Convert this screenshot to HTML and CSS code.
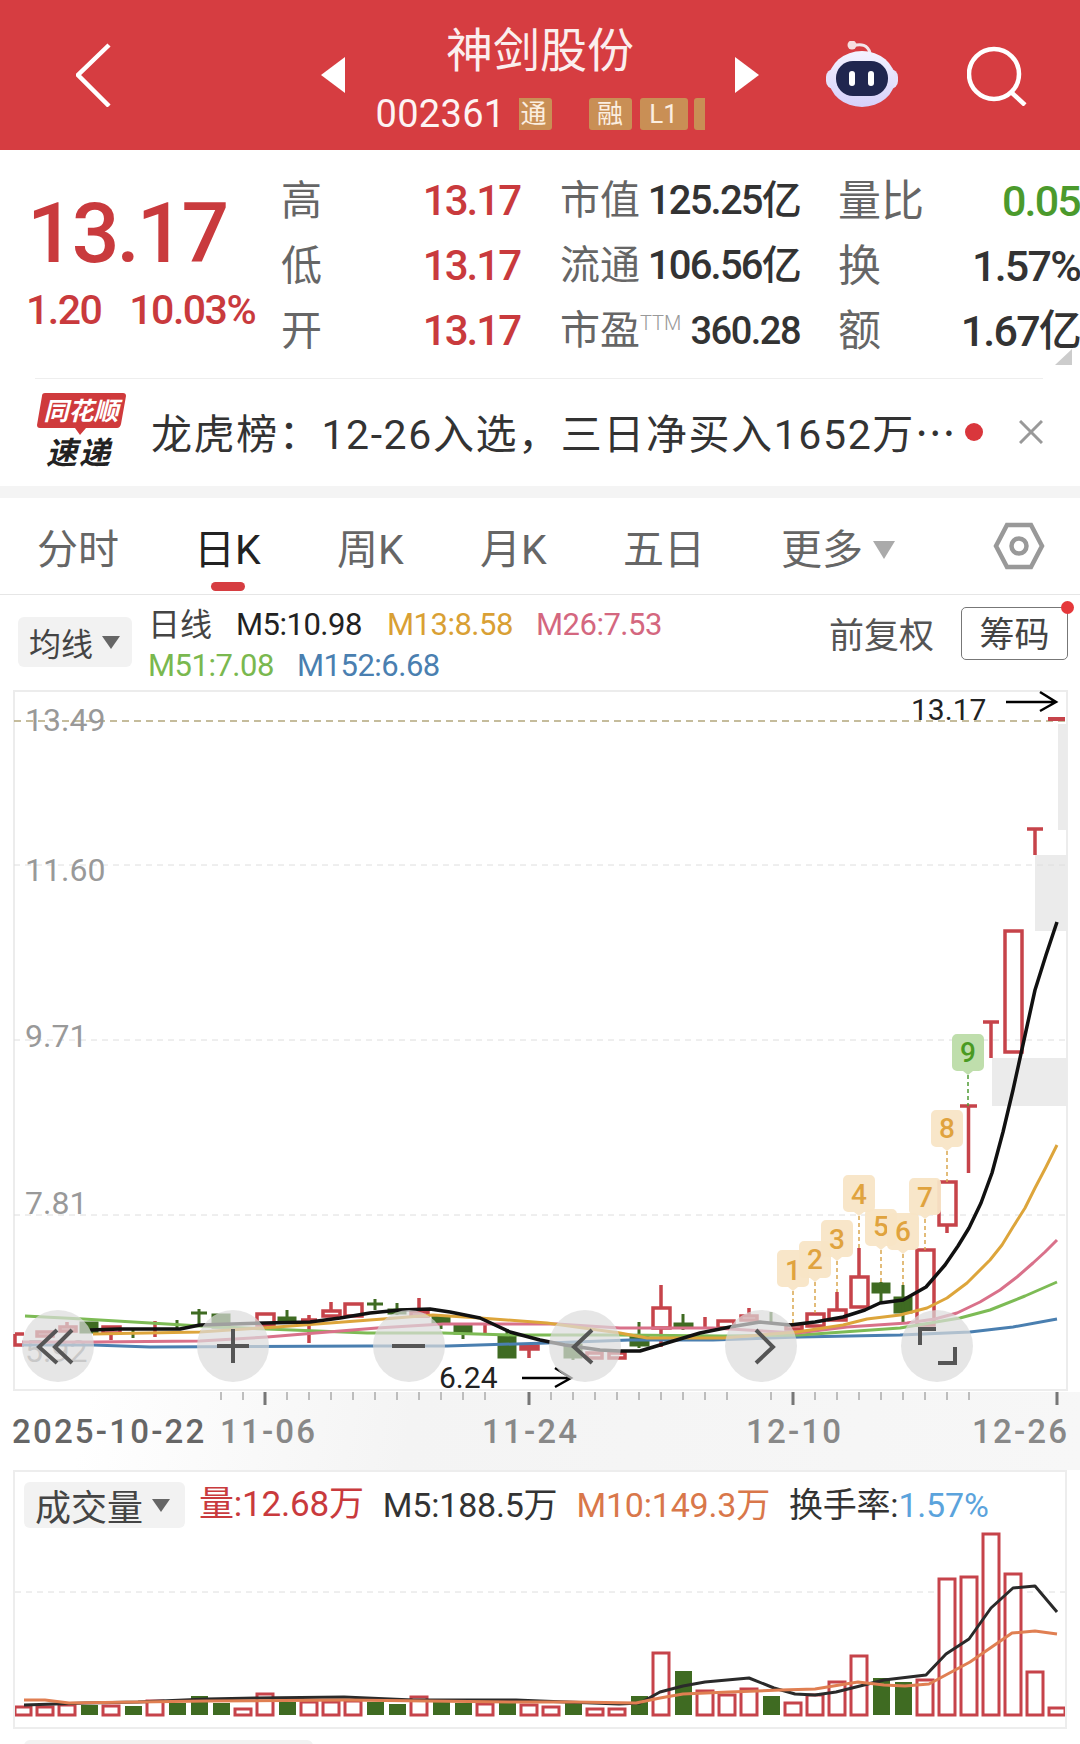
FILE: index.html
```html
<!DOCTYPE html>
<html lang="zh-CN">
<head>
  <meta charset="UTF-8">
  <title>神剑股份</title>
  <link rel="stylesheet" href="styles.css">
</head>
<body>
  <header class="topbar">
    <svg class="back" width="36" height="64" viewBox="0 0 36 64"><path d="M33 2 2 32l31 31"/></svg>
    <svg class="tri" width="24" height="36" viewBox="0 0 24 36"><path d="M24 0v36L0 18z"/></svg>
    <div class="title-block">
      <div class="title">神剑股份</div>
      <div class="code-row">
        <span class="code">002361</span>
        <div class="tags">
          <span class="tag tag-cut">通</span>
          <span class="tag tag-rong">融</span>
          <span class="tag tag-l1">L1</span>
          <span class="tag tag-end"></span>
        </div>
      </div>
    </div>
    <svg class="tri" width="24" height="36" viewBox="0 0 24 36"><path d="M0 0v36l24-18z"/></svg>
    <svg class="robot" width="72" height="68" viewBox="825 42 72 68">
      <defs>
        <linearGradient id="shell" x1="0" y1="0" x2="0" y2="1">
          <stop offset="0" stop-color="#f4f3ff"/>
          <stop offset="1" stop-color="#d6d0fa"/>
        </linearGradient>
      </defs>
      <path d="M852 47c8-3 15-1 17 7" fill="none" stroke="#f2e6ea" stroke-width="3"/>
      <circle cx="851" cy="46" r="4.5" fill="#f6dfe0"/>
      <rect x="825" y="70" width="72" height="20" rx="8" fill="#e6e2fb"/>
      <ellipse cx="861" cy="80" rx="33" ry="28" fill="url(#shell)"/>
      <rect x="835" y="62" width="52" height="35" rx="17" fill="#20264f"/>
      <rect x="848" y="72" width="6" height="15" rx="3" fill="#fff"/>
      <rect x="867" y="72" width="6" height="15" rx="3" fill="#fff"/>
    </svg>
    <svg class="search" width="60" height="62" viewBox="966 46 60 62"><circle cx="993" cy="76" r="25"/><path d="m1010 94 14 13"/></svg>
  </header>

  <section class="quote">
    <div class="price-box">
      <div class="price">13.17</div>
      <div class="change"><span>1.20</span><span>10.03%</span></div>
    </div>
    <div class="stats">
      <span class="lab big-lab">高</span><span class="val red">13.17</span>
      <span class="lab pad">市值</span><span class="val">125.25亿</span>
      <span class="lab pad2">量比</span><span class="val wide green">0.05</span>
      <span class="lab big-lab">低</span><span class="val red">13.17</span>
      <span class="lab pad">流通</span><span class="val">106.56亿</span>
      <span class="lab pad2">换</span><span class="val wide">1.57%</span>
      <span class="lab big-lab">开</span><span class="val red">13.17</span>
      <span class="lab pad">市盈<sup class="ttm">TTM</sup></span><span class="val tight">360.28</span>
      <span class="lab pad2">额</span><span class="val wide">1.67亿</span>
    </div>
    <span class="corner"></span>
  </section>

  <section class="news">
    <svg class="logo" width="90" height="80" viewBox="37 395 90 80">
      <path d="M45 396h78q3 0 3 3l-5 28q-1 4-4 4H86l-6 7-5-7H40q-3 0-3-3l5-29q0-3 3-3z" fill="#cf3a3c"/>
      <text x="81" y="423" class="logo-top">同花顺</text>
      <text x="79" y="467" class="logo-bot">速递</text>
    </svg>
    <div class="news-text">龙虎榜：12-26入选，三日净买入1652万⋯</div>
    <span class="news-dot"></span>
    <svg class="news-x" width="24" height="24" viewBox="0 0 24 24"><path d="M1 1l22 22M23 1 1 23"/></svg>
  </section>

  <nav class="tabs">
    <span class="tab">分时</span>
    <span class="tab active">日K</span>
    <span class="tab">周K</span>
    <span class="tab">月K</span>
    <span class="tab">五日</span>
    <span class="tab more">更多<i class="caret"></i></span>
    <svg class="gear" width="52" height="48" viewBox="993 522 52 48"><path d="M1007 525h24l11 21-11 21h-24l-11-21z"/><circle cx="1019" cy="546" r="7.5"/></svg>
  </nav>

  <section class="legend">
    <div class="pill">均线<i class="caret dark"></i></div>
    <div class="ma">
      <div class="ma-row">
        <span class="ma-name">日线</span>
        <span class="ma-item m5">M5:10.98</span>
        <span class="ma-item m13">M13:8.58</span>
        <span class="ma-item m26">M26:7.53</span>
      </div>
      <div class="ma-row">
        <span class="ma-item m51">M51:7.08</span>
        <span class="ma-item m152">M152:6.68</span>
      </div>
    </div>
    <div class="legend-right">
      <span class="adjust">前复权</span>
      <span class="chips">筹码<i class="chips-dot"></i></span>
    </div>
  </section>

  <svg class="kline" width="1080" height="702" viewBox="0 690 1080 702">
    <rect x="14" y="691" width="1053" height="699" fill="#fff" stroke="#ececec" stroke-width="2"/>
    <path class="band" d="M1058 724h9v106h-9zM1035 855h32v76h-32zM992 1058h75v48h-75z"/>
    <path class="grid" d="M14 865h1053M14 1040h1053M14 1215h1053"/>
    <path class="grid-top" d="M14 721h1053"/>

    <text class="axis-y" x="25" y="731">13.49</text>
    <text class="axis-y" x="25" y="881">11.60</text>
    <text class="axis-y" x="25" y="1047">9.71</text>
    <text class="axis-y" x="25" y="1214">7.81</text>
    <text class="axis-y" x="25" y="1362">5.92</text>

    <path class="up" d="M1027 829h16M1035 829v26M1005 931h17v121h-17zM983 1022h16M991 1022v36M960 1106h17M968.500 1106v67M939 1182h17v43h-17zM947 1225v8M917 1250h17v75h-17zM851 1277h17v30h-17zM859 1248v29M829 1310h17v10h-17zM837 1292v18M807 1314h17v12h-17zM786 1325h16v4h-16zM257 1314h17v11h-17zM265 1325v5M301 1320h16M309 1315v28M323 1311h17v5h-17zM331 1302v9M345 1304h17v12h-17zM103 1327h17v6h-17zM111 1333v7M15 1334h9M15 1334v11h9M37 1332h16v4h-16zM60 1327h16v4h-16zM67 1322v5M155 1321v16M411 1312h17v4h-17zM419 1298v14M485 1325v9M521 1346h17v3h-17zM529 1349v9M587 1353h15v5h-15zM609 1353h16v5h-16zM653 1308h17v20h-17zM661 1285v23M661 1328v19M705 1317v12M718 1321h16v7h-16zM741 1316h16v4h-16zM749 1308v8"/>
    <path class="up-flat" d="M1048 719h17"/>
    <path class="dn" d="M895 1298h16v14h-16zM903 1285v37M873 1284h16v8h-16zM881 1282v20M771 1312v12M675 1324h17v2h-17zM683 1314v16M631 1337h17v8h-17zM639 1322v26M565 1345h16v12h-16zM573 1357v3M499 1337h16v20h-16zM507 1329v8M455 1326h16v7h-16zM463 1333v6M433 1317h16v6h-16zM441 1323v6M389 1310h16v3h-16zM397 1303v12M367 1304h16M375 1299v11M279 1318h16v3h-16zM287 1310v13M191 1313h16M199 1309v15M213 1315h16v12h-16zM177 1320v8M133 1330v8M81 1323h16v9h-16z"/>

    <polyline class="ma-line blue" points="22,1345 93,1345 150,1347 367,1346 447,1346 547,1343 630,1340 713,1340 800,1337 900,1335 970,1332 1013,1327 1057,1319"/>
    <polyline class="ma-line lime" points="25,1316 83,1319 167,1324 200,1326 267,1329 367,1333 443,1333 513,1335 620,1335 723,1336 800,1335 900,1328 960,1318 990,1310 1025,1296 1057,1282"/>
    <polyline class="ma-line pink" points="22,1342 93,1342 200,1341 267,1337 377,1328 443,1324 557,1324 620,1328 713,1328 797,1333 847,1327 907,1323 935,1319 957,1313 980,1302 1000,1290 1017,1277 1033,1263 1045,1252 1057,1240"/>
    <polyline class="ma-line gold" points="93,1334 200,1332 277,1327 383,1319 433,1315 480,1318 547,1323 620,1333 647,1338 723,1338 797,1332 843,1325 867,1319 900,1315 927,1308 947,1298 967,1283 990,1260 1002,1245 1013,1227 1025,1208 1035,1188 1046,1167 1057,1145"/>
    <polyline class="ma-line black" points="90,1330 120,1329 180,1329 200,1325 265,1323 310,1322 340,1318 370,1313 400,1310 430,1309 450,1312 480,1318 510,1332 540,1340 565,1345 600,1350 620,1351 640,1351 660,1345 700,1333 730,1327 760,1322 790,1325 815,1322 843,1317 865,1310 880,1303 903,1300 926,1287 945,1265 958,1246 969,1228 981,1203 992,1173 1003,1132 1013,1090 1024,1040 1035,990 1046,955 1057,922"/>

    <path class="tag-line" d="M793 1291v34M815 1282v31M837 1261v31M859 1216v32M881 1250v32M903 1254v31M925 1219v31M947 1151v31"/>
    <path class="tag-line tag-line-g" d="M968 1075v31"/>

    <g transform="translate(793 1291)"><path class="note" d="M-11-41h22a5 5 0 0 1 5 5v27a5 5 0 0 1-5 5h-6l-5 4-5-4h-6a5 5 0 0 1-5-5v-27a5 5 0 0 1 5-5z"/><text class="note-num" y="-11">1</text></g>
    <g transform="translate(815 1282)"><path class="note" d="M-11-41h22a5 5 0 0 1 5 5v27a5 5 0 0 1-5 5h-6l-5 4-5-4h-6a5 5 0 0 1-5-5v-27a5 5 0 0 1 5-5z"/><text class="note-num" y="-13">2</text></g>
    <g transform="translate(837 1261)"><path class="note" d="M-11-41h22a5 5 0 0 1 5 5v27a5 5 0 0 1-5 5h-6l-5 4-5-4h-6a5 5 0 0 1-5-5v-27a5 5 0 0 1 5-5z"/><text class="note-num" y="-12">3</text></g>
    <g transform="translate(859 1216)"><path class="note" d="M-11-41h22a5 5 0 0 1 5 5v27a5 5 0 0 1-5 5h-6l-5 4-5-4h-6a5 5 0 0 1-5-5v-27a5 5 0 0 1 5-5z"/><text class="note-num" y="-12">4</text></g>
    <g transform="translate(881 1250)"><path class="note" d="M-11-41h22a5 5 0 0 1 5 5v27a5 5 0 0 1-5 5h-6l-5 4-5-4h-6a5 5 0 0 1-5-5v-27a5 5 0 0 1 5-5z"/><text class="note-num" y="-14">5</text></g>
    <g transform="translate(903 1254)"><path class="note" d="M-11-41h22a5 5 0 0 1 5 5v27a5 5 0 0 1-5 5h-6l-5 4-5-4h-6a5 5 0 0 1-5-5v-27a5 5 0 0 1 5-5z"/><text class="note-num" y="-13">6</text></g>
    <g transform="translate(925 1219)"><path class="note" d="M-11-41h22a5 5 0 0 1 5 5v27a5 5 0 0 1-5 5h-6l-5 4-5-4h-6a5 5 0 0 1-5-5v-27a5 5 0 0 1 5-5z"/><text class="note-num" y="-12">7</text></g>
    <g transform="translate(947 1151)"><path class="note" d="M-11-41h22a5 5 0 0 1 5 5v27a5 5 0 0 1-5 5h-6l-5 4-5-4h-6a5 5 0 0 1-5-5v-27a5 5 0 0 1 5-5z"/><text class="note-num" y="-13">8</text></g>
    <g transform="translate(968 1075)"><path class="note note-g" d="M-11-41h22a5 5 0 0 1 5 5v27a5 5 0 0 1-5 5h-6l-5 4-5-4h-6a5 5 0 0 1-5-5v-27a5 5 0 0 1 5-5z"/><text class="note-num note-num-g" y="-13">9</text></g>

    <text class="mark" x="911" y="720">13.17</text>
    <path class="mark-arrow" d="M1006 702h50M1040 692l16 10-16 9"/>
    <text class="mark" x="439" y="1388">6.24</text>
    <path class="mark-arrow" d="M522 1378h48M555 1368l16 10-16 9"/>

    <circle class="ctl" cx="58" cy="1346" r="36"/>
    <circle class="ctl" cx="233" cy="1346" r="36"/>
    <circle class="ctl" cx="409" cy="1346" r="36"/>
    <circle class="ctl" cx="585" cy="1346" r="36"/>
    <circle class="ctl" cx="761" cy="1346" r="36"/>
    <circle class="ctl" cx="937" cy="1346" r="36"/>
    <path class="ctl-icon" d="M57 1330l-18 17 18 16M72 1330l-17 17 17 16M217 1346h32M233 1329v34M392 1346h33M592 1330l-18 17 18 16M756 1330l17 17-17 16M920 1345v-16h16M938 1363h17v-16"/>
  </svg>

  <section class="axis">
    <svg class="ticks" width="1080" height="16" viewBox="0 1392 1080 16">
      <path class="tick" d="M221 1392v8m22-8v8m44-8v8m22-8v8m22-8v8m22-8v8m22-8v8m22-8v8m22-8v8m22-8v8m22-8v8m22-8v8m44-8v8m22-8v8m22-8v8m22-8v8m22-8v8m22-8v8m22-8v8m22-8v8m22-8v8m22-8v8m44-8v8m22-8v8m22-8v8m22-8v8m22-8v8m22-8v8m22-8v8m22-8v8m22-8v8m22-8v8"/>
      <path class="tick-major" d="M265 1392v13M529 1392v13M793 1392v13M1057 1392v13"/>
    </svg>
    <div class="dates">
      <span class="date first">2025-10-22</span>
      <span class="date d1">11-06</span>
      <span class="date d2">11-24</span>
      <span class="date d3">12-10</span>
      <span class="date d4">12-26</span>
    </div>
  </section>

  <section class="vol">
    <div class="vol-head">
      <div class="pill vol-pill">成交量<i class="caret dark"></i></div>
      <span class="vol-item red">量:12.68万</span>
      <span class="vol-item">M5:188.5万</span>
      <span class="vol-item orange">M10:149.3万</span>
      <span class="vol-item">换手率:<b class="rate">1.57%</b></span>
    </div>
    <svg class="vol-chart" width="1050" height="193" viewBox="15 1532 1050 193">
      <path class="grid" d="M15 1592h1050"/>
      <path class="vol-up" d="M15 1707h16v8h-16zM37 1707h16v8h-16zM59 1705h16v10h-16zM103 1706h16v9h-16zM147 1701h16v14h-16zM235 1709h16v6h-16zM257 1694h16v21h-16zM301 1702h16v13h-16zM323 1702h16v13h-16zM345 1701h16v14h-16zM411 1697h16v18h-16zM477 1704h16v11h-16zM521 1705h16v10h-16zM543 1707h16v8h-16zM587 1709h16v6h-16zM609 1709h16v6h-16zM653 1653h16v62h-16zM697 1691h16v24h-16zM719 1695h16v20h-16zM741 1689h16v26h-16zM785 1703h16v12h-16zM807 1695h16v20h-16zM829 1682h16v33h-16zM851 1656h16v59h-16zM917 1680h16v35h-16zM939 1579h16v136h-16zM961 1577h16v138h-16zM983 1534h16v181h-16zM1005 1574h16v141h-16zM1027 1672h16v43h-16zM1049 1708h16v7h-16z"/>
      <path class="vol-dn" d="M81 1705h17v10h-17zM125 1706h17v9h-17zM169 1703h17v12h-17zM191 1696h17v19h-17zM213 1703h17v12h-17zM279 1702h17v13h-17zM367 1702h17v13h-17zM389 1704h17v11h-17zM433 1702h17v13h-17zM455 1703h17v12h-17zM499 1702h17v13h-17zM565 1703h17v12h-17zM631 1696h17v19h-17zM675 1671h17v44h-17zM763 1696h17v19h-17zM873 1678h17v37h-17zM895 1682h17v33h-17z"/>
      <polyline class="vol-line v-black" points="24,1705 86,1703 138,1702 207,1699 258,1698 344,1697 413,1700 516,1700 540,1701 619,1704 640,1703 660,1692 683,1686 705,1682 749,1678 774,1688 795,1694 815,1695 836,1692 864,1685 884,1680 926,1675 946,1654 969,1639 991,1608 1013,1588 1035,1586 1057,1612"/>
      <polyline class="vol-line v-orange" points="24,1700 45,1700 69,1703 207,1701 344,1700 516,1702 574,1702 636,1703 660,1698 683,1694 729,1692 781,1690 815,1689 858,1682 884,1685 905,1686 929,1684 970,1662 1012,1633 1035,1631 1057,1634"/>
    </svg>
  </section>

  <div class="next-row"><span class="next-pill"></span></div>
</body>
</html>
```

FILE: styles.css
```css
* { box-sizing: border-box; }
html, body { margin: 0; padding: 0; }
body {
  width: 1080px;
  height: 1744px;
  overflow: hidden;
  background: #fff;
  color: #333;
  font-family: Roboto, "Noto Sans CJK SC", sans-serif;
}
i { font-style: normal; }

/* top bar */
.topbar {
  display: flex;
  align-items: center;
  height: 150px;
  padding-left: 76px;
  background: #d63d41;
}
.back { margin-right: 209px; }
.back path { fill: none; stroke: #fff; stroke-width: 4.500; }
.tri { fill: #fff; }
.title-block {
  display: flex;
  flex-direction: column;
  align-items: center;
  align-self: flex-start;
  width: 390px;
  padding-top: 23px;
  color: #fff;
}
.title { font-size: 47px; line-height: 56px; color: #fbeeee; }
.code-row { display: flex; align-items: center; width: 329px; margin-top: 19px; }
.code { width: 143px; font-size: 38px; line-height: 32px; letter-spacing: .3px; color: #fdf3f3; }
.tags { display: flex; width: 186px; overflow: hidden; }
.tag {
  display: block;
  height: 32px;
  background: #c98f55;
  border-radius: 3px;
  color: #fbeee0;
  font-size: 26px;
  line-height: 32px;
  text-align: center;
}
.tag-cut { width: 33px; border-radius: 0 3px 3px 0; text-indent: -3px; }
.tag-rong { width: 43px; margin-left: 37px; }
.tag-l1 { width: 48px; margin-left: 8px; }
.tag-end { width: 11px; margin-left: 6px; border-radius: 3px 0 0 3px; }
.robot { margin-left: 67px; }
.search { margin-left: 69px; fill: none; stroke: #fff; stroke-width: 4.500; }

/* quote */
.quote { position: relative; display: flex; height: 228px; padding: 18px 0 0 28px; }
.price-box { width: 253px; }
.price {
  margin: 26px 0 0 -1px;
  font-size: 84px;
  line-height: 80px;
  font-weight: 500;
  letter-spacing: -3px;
  color: #c93a3d;
}
.change {
  display: flex;
  gap: 28px;
  margin: 14px 0 0 -2px;
  font-size: 41px;
  line-height: 44px;
  font-weight: 500;
  letter-spacing: -1.500px;
  color: #c93a3d;
}
.stats {
  display: grid;
  grid-template-columns: 50px 189px 120px 160px 140px 140px;
  grid-auto-rows: 65px;
  align-items: center;
  width: 799px;
}
.lab { font-size: 40px; line-height: 50px; color: #666; white-space: nowrap; }
.big-lab { font-size: 41px; }
.pad { padding-left: 40px; }
.pad2 { padding-left: 38px; font-size: 43px; }
.val { font-size: 40px; line-height: 50px; font-weight: 500; letter-spacing: -1.800px; text-align: right; color: #333; white-space: nowrap; }
.val.wide { font-size: 43px; }
.val.tight { font-size: 38px; letter-spacing: -1.500px; }
.val.red { font-size: 42px; letter-spacing: -2px; color: #c93a3d; }
.val.green { color: #4b9a2c; }
.ttm { font-size: 20px; vertical-align: 14px; line-height: 0; color: #999; font-weight: 300; }
.corner {
  position: absolute;
  right: 8px;
  bottom: 13px;
  width: 0;
  height: 0;
  border-left: 17px solid transparent;
  border-bottom: 16px solid #ccc;
}

/* news */
.news {
  position: relative;
  display: flex;
  align-items: center;
  height: 120px;
  padding-left: 37px;
  border-bottom: 12px solid #f4f4f4;
}
.news::before {
  content: "";
  position: absolute;
  top: 0;
  left: 35px;
  width: 1008px;
  border-top: 1px solid #eee;
}
.logo { flex: none; overflow: visible; }
.logo-top { font-size: 25px; font-weight: 700; font-style: italic; fill: #fff; text-anchor: middle; }
.logo-bot { font-size: 31px; font-weight: 700; font-style: italic; fill: #222; text-anchor: middle; letter-spacing: 2px; }
.news-text { width: 800px; margin: 0 0 3px 24px; font-size: 41px; letter-spacing: 1.600px; color: #333; white-space: nowrap; }
.news-dot { width: 18px; height: 18px; margin-left: 14px; border-radius: 50%; background: #d9363c; }
.news-x { margin-left: 36px; fill: none; stroke: #999; stroke-width: 3; }

/* period tabs */
.tabs {
  position: relative;
  display: grid;
  grid-template-columns: 159px 141px 143px 143px 160px 212px 1fr;
  align-items: center;
  height: 97px;
  padding-left: 37px;
  border-bottom: 1px solid #e6e6e6;
}
.tab { position: relative; font-size: 41px; color: #666; }
.tab.active { margin-left: -2px; color: #222; }
.tab.more { margin-left: -2px; }
.tab.active::after {
  content: "";
  position: absolute;
  left: 17px;
  top: 66px;
  width: 34px;
  height: 9px;
  border-radius: 5px;
  background: #d63d41;
}
.caret {
  display: inline-block;
  margin-left: 10px;
  vertical-align: 5px;
  border-left: 11px solid transparent;
  border-right: 11px solid transparent;
  border-top: 18px solid #aaa;
}
.caret.dark { margin-left: 9px; border-left-width: 9px; border-right-width: 9px; border-top: 13px solid #666; }
.gear { position: absolute; left: 993px; top: 24px; fill: none; stroke: #999; stroke-width: 4.500; }

/* moving averages legend */
.legend { display: flex; height: 95px; padding-left: 18px; }
.pill {
  display: flex;
  align-items: center;
  width: 114px;
  height: 50px;
  margin-top: 22px;
  padding-left: 11px;
  border-radius: 6px;
  background: #f2f2f2;
  font-size: 32px;
  color: #444;
}
.ma { width: 640px; margin-left: 16px; }
.ma-row { display: flex; align-items: center; height: 41px; }
.ma-row:first-child { margin-top: 9px; }
.ma-name { width: 88px; margin-top: -5px; font-size: 32px; color: #444; }
.ma-item { width: 149px; font-size: 31px; letter-spacing: -.5px; white-space: nowrap; }
.m5 { width: 151px; color: #222; }
.m13 { color: #d9a034; }
.m26 { color: #d4677f; }
.m51 { color: #7ab84f; }
.m152 { color: #4a7fb0; }
.legend-right { display: flex; align-items: flex-start; margin-left: 41px; }
.adjust { margin-top: 17px; font-size: 35px; line-height: 50px; color: #555; }
.chips {
  position: relative;
  width: 107px;
  height: 53px;
  margin: 12px 0 0 27px;
  border: 1px solid #777;
  border-radius: 5px;
  font-size: 35px;
  line-height: 55px;
  text-align: center;
  color: #444;
}
.chips-dot {
  position: absolute;
  top: -7px;
  right: -7px;
  width: 13px;
  height: 13px;
  border-radius: 50%;
  background: #e5383b;
}

/* candles */
.kline { display: block; overflow: visible; }
.band { fill: #ebebeb; }
.grid { fill: none; stroke: #dedede; stroke-width: 1; stroke-dasharray: 6 5; }
.grid-top { fill: none; stroke: #b3a67c; stroke-width: 1.500; stroke-dasharray: 7 5; }
.axis-y { font-size: 32px; fill: #999; }
.up { fill: none; stroke: #c6434a; stroke-width: 3.500; }
.up-flat { fill: none; stroke: #c6434a; stroke-width: 4; }
.dn { fill: #3f6b22; stroke: #3f6b22; stroke-width: 3; }
.ma-line { fill: none; stroke-width: 3; stroke-linejoin: round; }
.black { stroke: #111; stroke-width: 3.500; }
.gold { stroke: #dda53b; }
.pink { stroke: #d9718a; }
.lime { stroke: #7dbb55; }
.blue { stroke: #4a7fb0; }
.tag-line { fill: none; stroke: #d9a64f; stroke-width: 1.500; stroke-dasharray: 4 3; }
.tag-line-g { stroke: #4f9a35; }
.note { fill: #f8e5c6; fill-opacity: .95; }
.note-g { fill: #bcdca8; }
.note-num { font-size: 28px; font-weight: 500; text-anchor: middle; fill: #e0a33e; }
.note-num-g { fill: #4a9a22; }
.mark { font-size: 30px; fill: #222; }
.mark-arrow { fill: none; stroke: #000; stroke-width: 2.500; }
.ctl { fill: #dcdcdc; fill-opacity: .7; }
.ctl-icon { fill: none; stroke: #555; stroke-width: 4; }

/* date axis */
.axis {
  height: 78px;
  background: linear-gradient(100deg, #fff 8%, #f4f4f4 38%, #f7f7f7 100%);
}
.ticks { display: block; }
.tick { fill: none; stroke: #aaa; stroke-width: 1.500; }
.tick-major { fill: none; stroke: #777; stroke-width: 3; }
.dates { display: flex; padding: 2px 0 0 12px; }
.date { font-size: 33px; line-height: 44px; letter-spacing: 2.200px; font-weight: 500; color: #888; white-space: nowrap; }
.first { width: 208px; color: #666; }
.d1 { width: 262px; }
.d2 { width: 264px; }
.d3 { width: 226px; }

/* volume */
.vol { height: 259px; margin: 0 13px; border: 2px solid #ededed; }
.vol-head { display: flex; align-items: flex-start; height: 60px; padding-left: 9px; }
.vol-pill { width: 161px; height: 46px; margin-top: 10px; font-size: 36px; padding-left: 11px; }
.vol-item { margin: 10px 0 0 19px; font-size: 34px; line-height: 46px; color: #333; letter-spacing: -.2px; white-space: nowrap; }
.vol-pill + .vol-item { margin-left: 14px; font-size: 35px; }
.vol-item.red { color: #c93a3d; }
.vol-item.orange { color: #d9774a; }
.rate { font-weight: 400; color: #5ba3dc; }
.vol-chart { display: block; }
.vol-up { fill: #fff; stroke: #c6434a; stroke-width: 3; }
.vol-dn { fill: #3f6b22; }
.vol-line { fill: none; stroke-width: 3; stroke-linejoin: round; }
.v-black { stroke: #2a2a2a; }
.v-orange { stroke: #e07f52; }

.next-row { padding: 11px 0 0 24px; }
.next-pill { display: block; width: 289px; height: 6px; border-radius: 6px 6px 0 0; background: #f2f2f2; }
```
